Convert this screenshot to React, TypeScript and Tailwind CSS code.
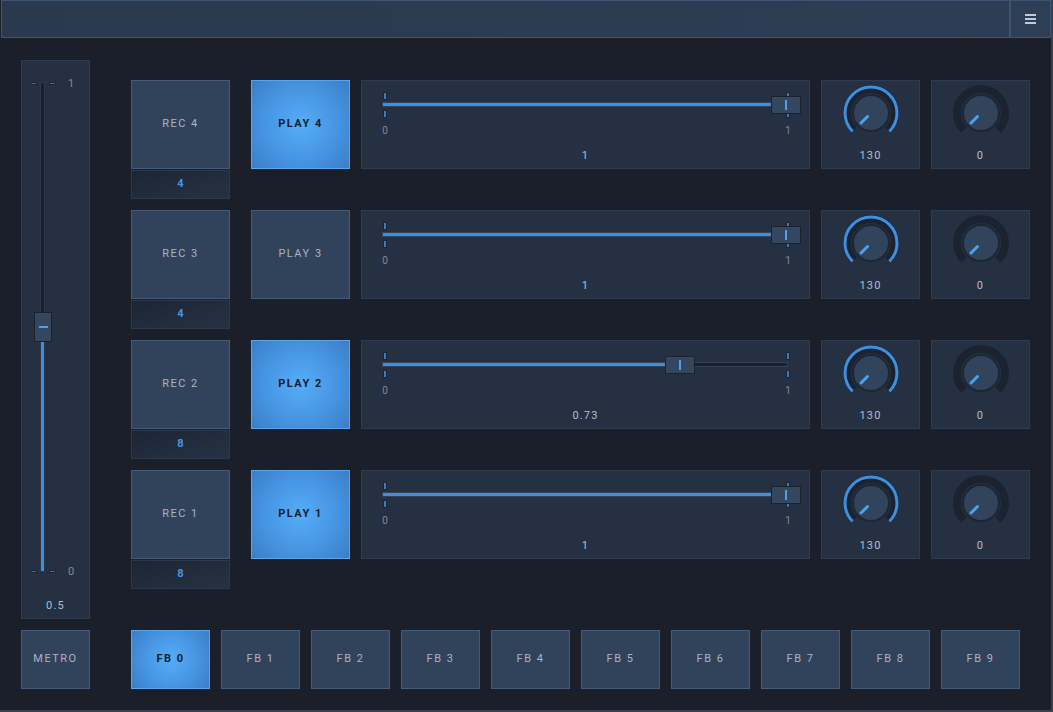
import React from "react";

type Row = { id: number; playOn: boolean; count: number; value: number };

const rows: Row[] = [
  { id: 4, playOn: true, count: 4, value: 1 },
  { id: 3, playOn: false, count: 4, value: 1 },
  { id: 2, playOn: true, count: 8, value: 0.73 },
  { id: 1, playOn: true, count: 8, value: 1 },
];

const font = { fontFamily: "Roboto, 'Noto Sans', sans-serif" };

const activeBtn =
  "border border-[#5aa6ee] bg-[radial-gradient(circle_at_center,#55adf8_0%,#4795e2_55%,#3b7dc6_100%)] text-[#172030] font-bold";
const idleBtn = "border border-[#465b78] bg-[#30435b] text-[#a9b4c3] font-normal";

const Knob: React.FC<{ value: string; lit: boolean }> = ({ value, lit }) => (
  <div className="flex h-[89px] w-[99px] flex-col items-center border border-[#2f3b4e] bg-[#253142]">
    <svg width="60" height="60" viewBox="0 0 60 60" className="mt-[2px]">
      <path d="M13.03 46.97 A24 24 0 1 1 46.97 46.97" fill="none" stroke="#1c2330" strokeWidth="8" />
      {lit && (
        <path d="M11.62 48.38 A26 26 0 1 1 48.38 48.38" fill="none" stroke="#3f8fe0" strokeWidth="3" />
      )}
      <circle cx="30" cy="30" r="18" fill="#31445c" stroke="#1d2633" strokeWidth="2" />
      <line x1="26.5" y1="33.5" x2="20" y2="40" stroke="#4aa3f2" strokeWidth="3" strokeLinecap="round" />
    </svg>
    <div className="mt-[5px] text-[11px] tracking-[1.2px] text-[#b4bfcc]">{value}</div>
  </div>
);

const HSlider: React.FC<{ value: number }> = ({ value }) => {
  const pos = 32 + value * 392;
  return (
    <div className="relative h-[89px] w-[449px] border border-[#2f3b4e] bg-[#253142]">
      <div className="absolute left-[20px] top-[21px] h-[5px] w-[406px] border border-[#34425a] bg-[#1a212c]">
        <div className="h-full bg-[#3f8fe0]" style={{ width: `${value * 100}%` }} />
      </div>
      <div className="absolute left-[21px] top-[11px] h-[8px] w-[4px] border border-[#1c2430] bg-[#3a7cc0]" />
      <div className="absolute left-[21px] top-[29px] h-[8px] w-[4px] border border-[#1c2430] bg-[#3a7cc0]" />
      <div className="absolute left-[424px] top-[11px] h-[8px] w-[4px] border border-[#1c2430] bg-[#3a7cc0]" />
      <div className="absolute left-[424px] top-[29px] h-[8px] w-[4px] border border-[#1c2430] bg-[#3a7cc0]" />
      <div
        className="absolute top-[15px] flex h-[18px] w-[30px] items-center justify-center border border-[#1b222d] bg-[#34475f]"
        style={{ left: pos - 15 }}
      >
        <div className="h-[10px] w-[2px] bg-[#4aa3f2]" />
      </div>
      <div className="absolute left-[18px] top-[42px] w-[10px] text-center text-[10px] text-[#7f8a99]">0</div>
      <div className="absolute left-[421px] top-[42px] w-[10px] text-center text-[10px] text-[#7f8a99]">1</div>
      <div className="absolute left-0 right-0 top-[67px] text-center text-[11px] tracking-[1.2px] text-[#b4bfcc]">
        {value}
      </div>
    </div>
  );
};

const Dash = () => <div className="h-[3px] w-[7px] border border-[#1c2430] bg-[#3a6fa6]" />;

const VSlider: React.FC = () => (
  <div className="relative h-[559px] w-[69px] border border-[#2f3b4e] bg-[#253142]">
    <div className="absolute left-[18px] top-[21px] flex h-[490px] w-[5px] flex-col border border-[#2c384a] bg-[#1a212c]">
      <div className="flex-1" />
      <div className="h-1/2 bg-[#3f8fe0]" />
    </div>
    <div className="absolute left-[8px] top-[21px]"><Dash /></div>
    <div className="absolute left-[27px] top-[21px]"><Dash /></div>
    <div className="absolute left-[8px] top-[509px]"><Dash /></div>
    <div className="absolute left-[27px] top-[509px]"><Dash /></div>
    <div className="absolute left-[46px] top-[15px] text-[11px] text-[#7f8a99]">1</div>
    <div className="absolute left-[46px] top-[503px] text-[11px] text-[#7f8a99]">0</div>
    <div className="absolute left-[12px] top-[251px] flex h-[30px] w-[18px] items-center justify-center border border-[#1b222d] bg-[#34475f]">
      <div className="h-[2px] w-[9px] bg-[#4aa3f2]" />
    </div>
    <div className="absolute left-0 right-0 top-[537px] text-center text-[11px] tracking-[1.2px] text-[#b4bfcc]">0.5</div>
  </div>
);

export default function App() {
  return (
    <div
      className="flex h-[712px] w-[1053px] flex-col border-b-2 border-r-2 border-[#3a414c] bg-[#1a1f2a]"
      style={font}
    >
      <header className="flex h-[38px] shrink-0">
        <div className="ml-[1px] flex-1 border border-[#3d5473] bg-gradient-to-r from-[#2a394d] to-[#2d3e54]" />
        <div className="flex w-[41px] items-center justify-center border border-[#3d5473] bg-[#2e3f55]">
          <div className="flex flex-col gap-[2px]">
            <div className="h-[2px] w-[11px] bg-[#c3cbd6]" />
            <div className="h-[2px] w-[11px] bg-[#c3cbd6]" />
            <div className="h-[2px] w-[11px] bg-[#c3cbd6]" />
          </div>
        </div>
      </header>

      <div className="flex pl-[21px] pt-[22px]">
        <div className="flex w-[69px] flex-col">
          <VSlider />
          <button
            className={`mt-[11px] flex h-[59px] w-[69px] items-center justify-center text-[11px] tracking-[1.5px] ${idleBtn}`}
          >
            METRO
          </button>
        </div>

        <div className="ml-[41px] flex flex-col pt-[20px]">
          {rows.map((r) => (
            <div key={r.id} className="flex h-[130px] items-start">
              <div className="flex w-[99px] flex-col">
                <button
                  className={`flex h-[89px] items-center justify-center text-[11px] tracking-[1.5px] ${idleBtn}`}
                >
                  REC {r.id}
                </button>
                <div className="mt-[1px] flex h-[29px] items-center justify-center border border-[#2d394b] bg-gradient-to-br from-[#1c2534] to-[#263244] text-[11px] font-bold text-[#4a93e4]">
                  {r.count}
                </div>
              </div>
              <button
                className={`ml-[21px] flex h-[89px] w-[99px] items-center justify-center text-[11px] tracking-[1.5px] ${
                  r.playOn ? activeBtn : idleBtn
                }`}
              >
                PLAY {r.id}
              </button>
              <div className="ml-[11px]">
                <HSlider value={r.value} />
              </div>
              <div className="ml-[11px]">
                <Knob value="130" lit />
              </div>
              <div className="ml-[11px]">
                <Knob value="0" lit={false} />
              </div>
            </div>
          ))}

          <div className="mt-[30px] flex gap-[11px]">
            {Array.from({ length: 10 }, (_, i) => (
              <button
                key={i}
                className={`flex h-[59px] w-[79px] items-center justify-center text-[11px] tracking-[1.5px] ${
                  i === 0 ? activeBtn : idleBtn
                }`}
              >
                FB {i}
              </button>
            ))}
          </div>
        </div>
      </div>
    </div>
  );
}
